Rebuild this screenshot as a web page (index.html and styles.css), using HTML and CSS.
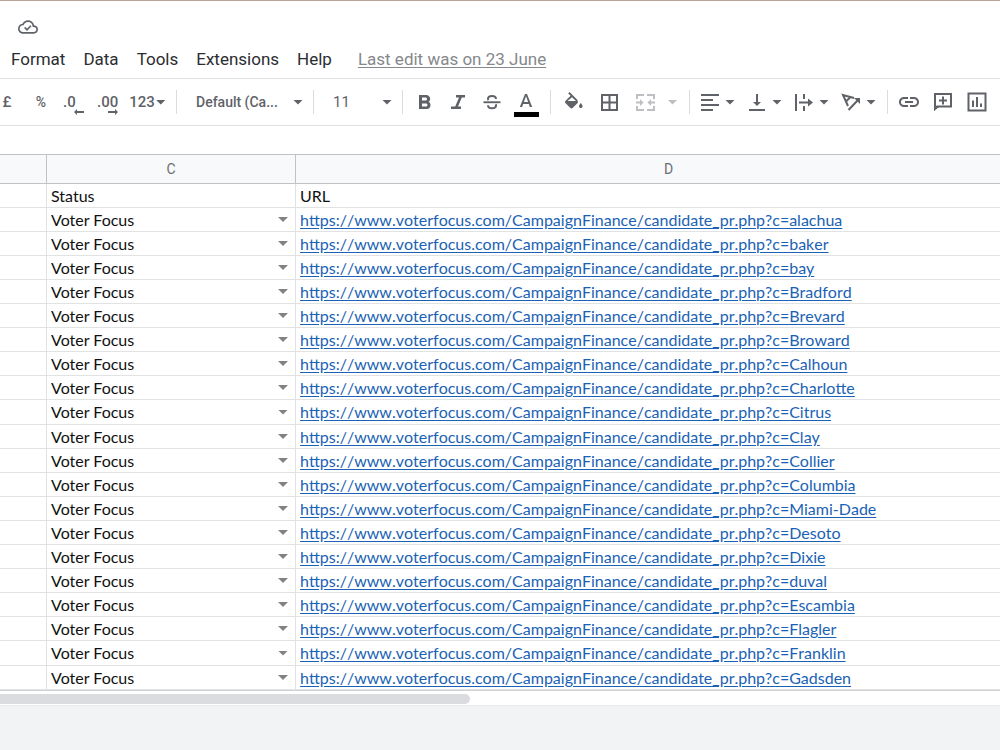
FILE: index.html
```html
<!DOCTYPE html>
<html lang="en-GB">
  <head>
    <meta charset="UTF-8" />
    <meta name="viewport" content="width=device-width, initial-scale=1.0" />
    <title>Spreadsheet</title>
    <link rel="stylesheet" href="styles.css">
  </head>
  <body>
    <header class="header">
      <div class="doc-status">
        <svg class="cloud" viewBox="0 0 24 24" role="img" aria-label="Saved">
          <path d="M19.35 10.04C18.67 6.59 15.64 4 12 4 9.11 4 6.61 5.64 5.36 8.04 2.35 8.36 0 10.9 0 14c0 3.31 2.69 6 6 6h13c2.76 0 5-2.24 5-5 0-2.64-2.05-4.78-4.65-4.96zM19 18H6c-2.21 0-4-1.79-4-4s1.79-4 4-4h.71C7.37 7.69 9.48 6 12 6c3.04 0 5.5 2.46 5.5 5.5v.5H19c1.66 0 3 1.34 3 3s-1.34 3-3 3z" />
          <path class="line" d="M8 12.5l2.8 2.8 4.7-4.8" />
        </svg>
      </div>
      <nav class="menu">
        <button>Format</button>
        <button>Data</button>
        <button>Tools</button>
        <button>Extensions</button>
        <button>Help</button>
        <a class="last-edit" href="#">Last edit was on 23 June</a>
      </nav>
    </header>

    <div class="toolbar" role="toolbar">
      <!-- number formats -->
      <button class="tool">£</button>
      <button class="tool percent">%</button>
      <button class="tool decimal">
        <span>.0</span>
        <svg viewBox="0 0 10 6"><path d="M0 3l3-3v2h7v2H3v2z" /></svg>
      </button>
      <button class="tool decimal">
        <span>.00</span>
        <svg viewBox="0 0 10 6"><path d="M10 3L7 0v2H0v2h7v2z" /></svg>
      </button>
      <button class="tool formats">123<i class="arrow"></i></button>
      <span class="sep"></span>

      <label class="picker picker-font">
        <select aria-label="Font"><option>Default (Ca...</option></select>
        <i class="arrow"></i>
      </label>
      <span class="sep"></span>
      <label class="picker picker-size">
        <select aria-label="Font size"><option>11</option></select>
        <i class="arrow"></i>
      </label>
      <span class="sep"></span>

      <!-- text style -->
      <button class="tool" aria-label="Bold">
        <svg class="icon" viewBox="0 0 24 24"><path d="M16.600 11.800c1-.7 1.600-1.800 1.600-2.800 0-2.300-1.800-4-4-4H7v14h7.800c2.100 0 3.700-1.700 3.700-3.800 0-1.500-.8-2.800-1.900-3.400zM10 7.500h3.500c.8 0 1.500.7 1.500 1.500s-.7 1.500-1.500 1.500H10v-3zm4 9h-4v-3h4c.8 0 1.500.7 1.500 1.500s-.7 1.500-1.500 1.500z" /></svg>
      </button>
      <button class="tool" aria-label="Italic">
        <svg class="icon" viewBox="0 0 24 24"><path d="M10 5v2.500h3L9.200 16.500H5V19h10v-2.500h-3L15.800 7.500H19V5z" /></svg>
      </button>
      <button class="tool" aria-label="Strikethrough">
        <svg class="icon" viewBox="0 0 24 24">
          <path d="M3.500 11.300h17v1.900h-17z" />
          <path class="line thick" d="M16 9c0-1.800-1.500-3-4-3-2.300 0-4 1.100-4 2.800 0 .5.200 1 .5 1.400M8 15.200C8 17 9.600 18.200 12 18.200s4-1.100 4-2.800c0-.5-.1-.8-.3-1.200" />
        </svg>
      </button>
      <button class="tool text-color" aria-label="Text colour">
        <svg class="icon" viewBox="0 0 24 24"><path d="M11 4L5.800 17h2.300l1.100-3h5.600l1.100 3h2.300L13 4h-2zm-1.100 8L12 6.300 14.100 12H9.900z" /></svg>
      </button>
      <span class="sep"></span>

      <!-- cell style -->
      <button class="tool wide" aria-label="Fill colour">
        <svg class="icon" viewBox="0 0 24 24"><path d="M16.500 9.900L8.600 2 7.200 3.400l2.400 2.400-5.200 5.200c-.6.600-.6 1.500 0 2.100l5 5c.3.300.7.400 1.100.4s.8-.1 1.100-.4l5-5c.500-.6.500-1.600-.1-2.200zM6.500 11L11 7.200 15 11H6.500zM19.800 13s-1.800 2-1.800 3.200c0 1 .8 1.800 1.800 1.800s1.800-.8 1.800-1.800c0-1.200-1.800-3.200-1.800-3.200z" /></svg>
      </button>
      <button class="tool wide" aria-label="Borders">
        <svg class="icon" viewBox="0 0 24 24"><path d="M4 4v17h17V4H4zm7.500 15H6v-5.500h5.500V19zm0-7.500H6V6h5.500v5.500zM19 19h-5.500v-5.500H19V19zm0-7.500h-5.500V6H19v5.500z" /></svg>
      </button>
      <button class="tool wide" aria-label="Merge cells" disabled>
        <svg class="icon" viewBox="0 0 24 24">
          <path class="line thick" d="M4 9V5h7M14 5h7v4M4 16v4h7M14 20h7v-4" />
          <path d="M3 11.500h4V9l3.500 3.500L7 16v-2.500H3zM22 11.500h-4V9l-3.500 3.500L18 16v-2.500h4z" />
        </svg>
      </button>
      <button class="tool slim" aria-label="Merge options" disabled><i class="arrow"></i></button>
      <span class="sep"></span>

      <!-- alignment -->
      <div class="combos">
        <button class="tool combo" aria-label="Horizontal align">
          <svg class="icon" viewBox="0 0 24 24"><path d="M3 4h18v2H3zM3 8h12v2H3zM3 12h18v2H3zM3 16h12v2H3zM3 19h12v2H3z" fill="none" /><path d="M3 4h18v2H3zM3 9h12v2H3zM3 14h18v2H3zM3 19h12v2H3z" /></svg>
          <i class="arrow"></i>
        </button>
        <button class="tool combo" aria-label="Vertical align">
          <svg class="icon" viewBox="0 0 24 24"><path d="M16 12h-3V4h-2v8H8l4 4 4-4zM4 19v2h16v-2z" /></svg>
          <i class="arrow"></i>
        </button>
        <button class="tool combo" aria-label="Text wrapping">
          <svg class="icon" viewBox="0 0 24 24"><path d="M3 4h2v17H3zM11 4h2v5h-2zM11 16h2v5h-2zM7 11.500h9V8.500l5 4-5 4v-3H7z" /></svg>
          <i class="arrow"></i>
        </button>
        <button class="tool combo" aria-label="Text rotation">
          <svg class="icon" viewBox="0 0 24 24">
            <path class="line" d="M15 8L4 5l5 11M6.500 12L11 7.500M9.500 20L19 10" />
            <path d="M15 8h6v6z" />
          </svg>
          <i class="arrow"></i>
        </button>
      </div>
      <span class="sep"></span>

      <!-- insert -->
      <button class="tool" aria-label="Insert link">
        <svg class="icon" viewBox="0 0 24 24"><path d="M3.900 12c0-1.700 1.400-3.100 3.100-3.100h4V7H7c-2.800 0-5 2.200-5 5s2.200 5 5 5h4v-1.900H7c-1.700 0-3.100-1.400-3.100-3.100zM8 13h8v-2H8v2zm9-6h-4v1.900h4c1.700 0 3.100 1.400 3.100 3.100s-1.400 3.100-3.100 3.100h-4V17h4c2.800 0 5-2.200 5-5s-2.200-5-5-5z" /></svg>
      </button>
      <button class="tool" aria-label="Insert comment">
        <svg class="icon" viewBox="0 0 24 24">
          <path class="line thick" d="M4 18.500V4h16v12.500H6z" />
          <path d="M3 15v6l5-4zM11 6.500h2v3h3v2h-3v3h-2v-3H8v-2h3z" />
        </svg>
      </button>
      <button class="tool" aria-label="Insert chart">
        <svg class="icon" viewBox="0 0 24 24">
          <path class="line thick" d="M3.500 3.500h17v17h-17z" />
          <path d="M7 10.500h2V17H7zM11 7h2v10h-2zM15 13.500h2V17h-2z" />
        </svg>
      </button>
    </div>

    <div class="formula-bar"></div>

    <main class="sheet">
      <table class="grid">
        <colgroup><col class="col-b"><col class="col-c"><col class="col-d"></colgroup>
        <thead>
          <tr><th></th><th>C</th><th>D</th></tr>
        </thead>
        <tbody>
          <tr><td></td><td>Status</td><td>URL</td></tr>
          <tr><td></td><td><label class="status"><select aria-label="Status"><option>Voter Focus</option></select><i class="arrow"></i></label></td><td><a href="#">https://www.voterfocus.com/CampaignFinance/candidate_pr.php?c=alachua</a></td></tr>
          <tr><td></td><td><label class="status"><select aria-label="Status"><option>Voter Focus</option></select><i class="arrow"></i></label></td><td><a href="#">https://www.voterfocus.com/CampaignFinance/candidate_pr.php?c=baker</a></td></tr>
          <tr><td></td><td><label class="status"><select aria-label="Status"><option>Voter Focus</option></select><i class="arrow"></i></label></td><td><a href="#">https://www.voterfocus.com/CampaignFinance/candidate_pr.php?c=bay</a></td></tr>
          <tr><td></td><td><label class="status"><select aria-label="Status"><option>Voter Focus</option></select><i class="arrow"></i></label></td><td><a href="#">https://www.voterfocus.com/CampaignFinance/candidate_pr.php?c=Bradford</a></td></tr>
          <tr><td></td><td><label class="status"><select aria-label="Status"><option>Voter Focus</option></select><i class="arrow"></i></label></td><td><a href="#">https://www.voterfocus.com/CampaignFinance/candidate_pr.php?c=Brevard</a></td></tr>
          <tr><td></td><td><label class="status"><select aria-label="Status"><option>Voter Focus</option></select><i class="arrow"></i></label></td><td><a href="#">https://www.voterfocus.com/CampaignFinance/candidate_pr.php?c=Broward</a></td></tr>
          <tr><td></td><td><label class="status"><select aria-label="Status"><option>Voter Focus</option></select><i class="arrow"></i></label></td><td><a href="#">https://www.voterfocus.com/CampaignFinance/candidate_pr.php?c=Calhoun</a></td></tr>
          <tr><td></td><td><label class="status"><select aria-label="Status"><option>Voter Focus</option></select><i class="arrow"></i></label></td><td><a href="#">https://www.voterfocus.com/CampaignFinance/candidate_pr.php?c=Charlotte</a></td></tr>
          <tr><td></td><td><label class="status"><select aria-label="Status"><option>Voter Focus</option></select><i class="arrow"></i></label></td><td><a href="#">https://www.voterfocus.com/CampaignFinance/candidate_pr.php?c=Citrus</a></td></tr>
          <tr><td></td><td><label class="status"><select aria-label="Status"><option>Voter Focus</option></select><i class="arrow"></i></label></td><td><a href="#">https://www.voterfocus.com/CampaignFinance/candidate_pr.php?c=Clay</a></td></tr>
          <tr><td></td><td><label class="status"><select aria-label="Status"><option>Voter Focus</option></select><i class="arrow"></i></label></td><td><a href="#">https://www.voterfocus.com/CampaignFinance/candidate_pr.php?c=Collier</a></td></tr>
          <tr><td></td><td><label class="status"><select aria-label="Status"><option>Voter Focus</option></select><i class="arrow"></i></label></td><td><a href="#">https://www.voterfocus.com/CampaignFinance/candidate_pr.php?c=Columbia</a></td></tr>
          <tr><td></td><td><label class="status"><select aria-label="Status"><option>Voter Focus</option></select><i class="arrow"></i></label></td><td><a href="#">https://www.voterfocus.com/CampaignFinance/candidate_pr.php?c=Miami-Dade</a></td></tr>
          <tr><td></td><td><label class="status"><select aria-label="Status"><option>Voter Focus</option></select><i class="arrow"></i></label></td><td><a href="#">https://www.voterfocus.com/CampaignFinance/candidate_pr.php?c=Desoto</a></td></tr>
          <tr><td></td><td><label class="status"><select aria-label="Status"><option>Voter Focus</option></select><i class="arrow"></i></label></td><td><a href="#">https://www.voterfocus.com/CampaignFinance/candidate_pr.php?c=Dixie</a></td></tr>
          <tr><td></td><td><label class="status"><select aria-label="Status"><option>Voter Focus</option></select><i class="arrow"></i></label></td><td><a href="#">https://www.voterfocus.com/CampaignFinance/candidate_pr.php?c=duval</a></td></tr>
          <tr><td></td><td><label class="status"><select aria-label="Status"><option>Voter Focus</option></select><i class="arrow"></i></label></td><td><a href="#">https://www.voterfocus.com/CampaignFinance/candidate_pr.php?c=Escambia</a></td></tr>
          <tr><td></td><td><label class="status"><select aria-label="Status"><option>Voter Focus</option></select><i class="arrow"></i></label></td><td><a href="#">https://www.voterfocus.com/CampaignFinance/candidate_pr.php?c=Flagler</a></td></tr>
          <tr><td></td><td><label class="status"><select aria-label="Status"><option>Voter Focus</option></select><i class="arrow"></i></label></td><td><a href="#">https://www.voterfocus.com/CampaignFinance/candidate_pr.php?c=Franklin</a></td></tr>
          <tr><td></td><td><label class="status"><select aria-label="Status"><option>Voter Focus</option></select><i class="arrow"></i></label></td><td><a href="#">https://www.voterfocus.com/CampaignFinance/candidate_pr.php?c=Gadsden</a></td></tr>
        </tbody>
      </table>
    </main>

    <div class="scrollbar"><div class="thumb"></div></div>
  </body>
</html>
```
FILE: styles.css
```css
* {
  box-sizing: border-box;
}

body {
  margin: 0;
  min-height: 100vh;
  background: #f1f3f4;
  font-family: Roboto, "Liberation Sans", sans-serif;
  overflow-x: hidden;
}

button,
select {
  font: inherit;
  color: inherit;
  background: none;
  border: none;
  padding: 0;
  margin: 0;
  appearance: none;
  cursor: pointer;
}

/* header */
.header {
  background: #fff;
  border-top: 1px solid #b9a698;
  border-bottom: 1px solid #dfe1e4;
}

.doc-status {
  display: flex;
  align-items: center;
  height: 38px;
  padding: 14px 18px 0;
}

.cloud {
  width: 20px;
  height: 20px;
  fill: #5f6368;
  color: #5f6368;
}

.line {
  fill: none;
  stroke: currentColor;
  stroke-width: 2;
}

.menu {
  display: flex;
  align-items: center;
  gap: 18px;
  height: 39px;
  padding: 0 11px;
  font-size: 17px;
  color: #2b2d31;
}

.last-edit {
  margin-left: 8px;
  color: #85888c;
  text-underline-offset: 2px;
}

/* toolbar */
.toolbar {
  display: flex;
  align-items: center;
  height: 47px;
  margin-left: -10px;
  background: #fff;
  border-bottom: 1px solid #dfe1e4;
  font-size: 15px;
  color: #5f6368;
}

.tool {
  display: flex;
  flex: none;
  align-items: center;
  justify-content: center;
  width: 34px;
  height: 34px;
  font-weight: 500;
}

.tool:disabled {
  color: #bdbfc2;
}

.tool svg {
  fill: currentColor;
}

.tool .line {
  fill: none;
}

.icon {
  width: 24px;
  height: 24px;
}

.percent {
  font-size: 14px;
}

.decimal {
  flex-direction: column;
  align-items: flex-start;
  padding-left: 5px;
}

.decimal svg {
  width: 10px;
  height: 6px;
  margin: -2px 0 -4px 11px;
}

.formats {
  width: 43px;
  gap: 1px;
}

.wide {
  width: 36px;
}

.slim {
  width: 19px;
}

.text-color {
  flex-direction: column;
}

.text-color::after {
  content: "";
  width: 25px;
  height: 5px;
  margin: -2px 0 -3px;
  background: #000;
}

.combos {
  display: flex;
  gap: 2px;
}

.combo {
  width: 45px;
  justify-content: flex-start;
  padding-left: 4px;
  gap: 3px;
}

.sep {
  flex: none;
  width: 1px;
  height: 24px;
  margin: 0 4px 0 7px;
  background: #dadce0;
}

.arrow {
  flex: none;
  width: 10px;
  height: 5px;
  background: currentColor;
  clip-path: polygon(0 0, 100% 0, 50% 100%);
}

/* select with its own arrow laid over the right end */
.picker,
.status {
  display: grid;
  flex: none;
  align-items: center;
}

.picker select,
.picker .arrow,
.status select,
.status .arrow {
  grid-area: 1 / 1;
}

.picker .arrow,
.status .arrow {
  justify-self: end;
  pointer-events: none;
}

.picker {
  padding-right: 3px;
}

.picker select {
  padding-left: 15px;
}

.picker-font {
  width: 125px;
  font-size: 14px;
  font-weight: 500;
}

.picker-size {
  width: 77px;
}

.formula-bar {
  height: 28px;
  background: #fff;
}

/* grid */
.sheet {
  overflow: hidden;
  background: #fff;
}

.grid {
  width: 1042px;
  border-collapse: separate;
  border-spacing: 0;
  table-layout: fixed;
  font-family: Lato, "Liberation Sans", sans-serif;
  font-size: 16px;
  line-height: 20px;
  color: #111;
}

.col-b {
  width: 47px;
}

.col-c {
  width: 249px;
}

.grid th {
  height: 30px;
  padding: 0;
  background: #f8f9fa;
  border: solid #c0c3c5;
  border-width: 1px 1px 1px 0;
  font-family: Roboto, "Liberation Sans", sans-serif;
  font-size: 14px;
  font-weight: 400;
  color: #6b6e72;
}

.grid td {
  height: 24px;
  padding: 0 4px;
  border: solid #e1e2e3;
  border-width: 0 1px 1px 0;
  white-space: nowrap;
}

.grid tbody tr:nth-child(10n) td {
  height: 25px;
}

.grid a {
  color: #1a62b5;
  font-kerning: none;
  text-underline-offset: 2px;
}

.status {
  padding-right: 3px;
}

.status select {
  height: 20px;
}

.status .arrow {
  background: #808386;
}

/* horizontal scrollbar */
.scrollbar {
  height: 16px;
  padding-top: 3px;
  background: #fff;
  border-top: 1px solid #d0d2d4;
  border-bottom: 1px solid #e6e8ea;
}

.thumb {
  width: 47%;
  height: 10px;
  background: #dadce0;
  border-radius: 0 5px 5px 0;
}
```
